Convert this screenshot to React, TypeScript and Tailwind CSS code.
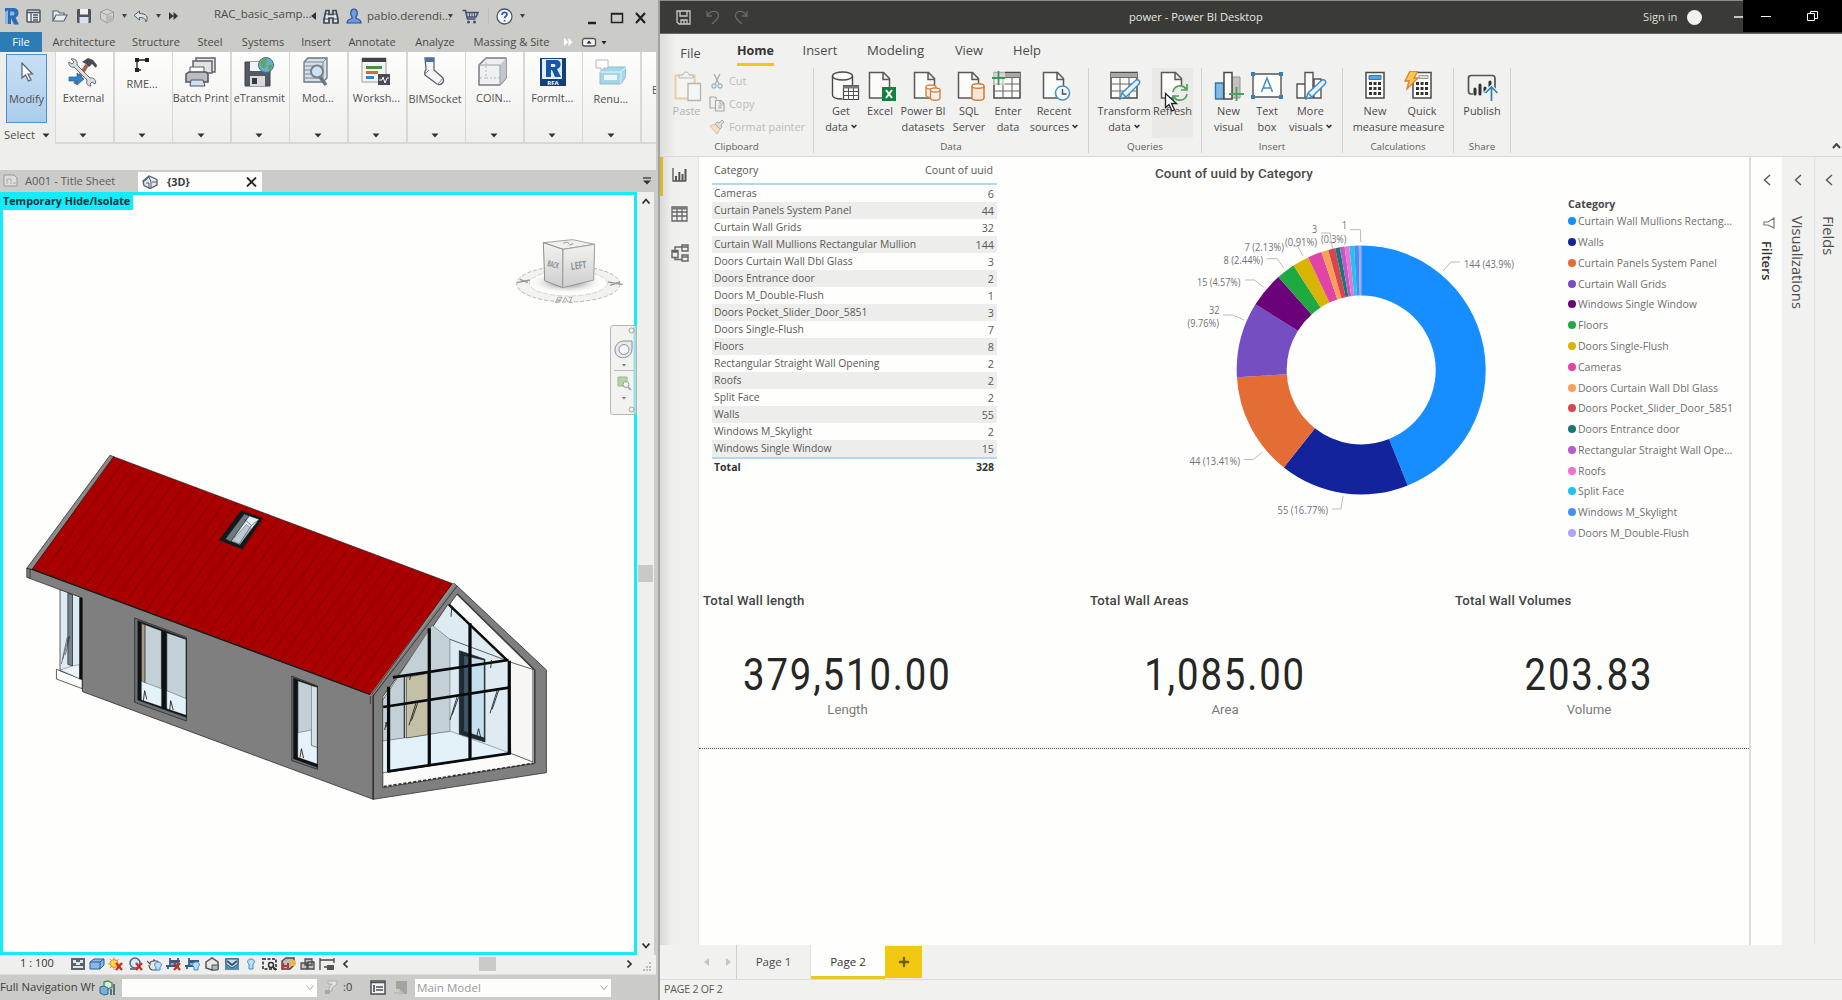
import React from "react";
import { Plus } from "lucide-react";

type Kids = { children?: React.ReactNode };

function Icon({ w, h, box, className = "", children }: Kids & { w: number; h: number; box?: string; className?: string }) {
  return (
    <svg width={w} height={h} viewBox={box ?? `0 0 ${w} ${h}`} fill="none" className={"block shrink-0 " + className}>
      {children}
    </svg>
  );
}

const Caret = ({ className = "" }: { className?: string }) => (
  <Icon w={8} h={5} className={className}>
    <path d="M0.5 0.5h7l-3.5 4z" fill="#333" />
  </Icon>
);

/* ---------------------------------------------------------------- Revit */

function RevitTitleBar() {
  return (
    <div className="flex h-8 items-center bg-[#cbcbc8] text-[12px] text-[#4c4c4c]">
      <Icon w={15} h={18} className="ml-1">
        <path d="M1 1h8c4 0 5.500 2 5.500 5 0 2-1 3.500-3 4.500l3.500 7h-5L7 11v6H1z" fill="#2a6db4" />
        <path d="M1 17V5l3-2v14zM6 4.500h3c2 0 2 4 0 4H6z" fill="#8ab8e4" />
      </Icon>
      <Icon w={15} h={14} className="ml-[7px]">
        <rect x="1" y="1" width="13" height="12" rx="1" fill="#f2f2f2" stroke="#4b5665" strokeWidth="1.5" />
        <path d="M1 3.500h13M5 4v9M7 6h5M7 8.500h5M7 11h5" stroke="#4b5665" strokeWidth="1.300" />
      </Icon>
      <Icon w={16} h={12} className="ml-[11px]">
        <path d="M1 11V1h5l1.500 2H12v2M1 11l3-6h11l-3 6z" fill="#e8edf3" stroke="#5a6470" strokeWidth="1.200" />
      </Icon>
      <Icon w={16} h={16} className="ml-2">
        <rect x="1" y="1" width="14" height="14" rx="1" fill="#4c5560" />
        <rect x="4" y="1" width="8" height="5.500" fill="#f1f1f1" />
        <rect x="3.500" y="9" width="9" height="6" fill="#d9e2ec" />
      </Icon>
      <Icon w={16} h={16} className="ml-[7px]">
        <path d="M8 1l6.500 3v7L8 15 1.500 11V4z" fill="#d2d2d0" stroke="#9b9b99" />
        <path d="M1.500 4L8 7l6.500-3M8 7v8" stroke="#a2a2a0" />
        <circle cx="11" cy="11" r="3.500" fill="#b9b9b7" />
      </Icon>
      <Icon w={5} h={4} className="ml-[7px]"><path d="M0 0h5L2.500 4z" fill="#444" /></Icon>
      <Icon w={16} h={13} className="ml-[6px]">
        <path d="M6.500 1L1 5.500l5.500 4.500V7.500c4 0 6 1 6.500 4.500 3-5 0-8.500-6.500-8.500z" fill="#dce1e6" stroke="#565f69" />
      </Icon>
      <Icon w={5} h={4} className="ml-[7px]"><path d="M0 0h5L2.500 4z" fill="#444" /></Icon>
      <Icon w={9} h={8} className="ml-[8px]"><path d="M0 0l4.500 4L0 8zM4.500 0L9 4 4.500 8z" fill="#333" /></Icon>
      <span className="-mt-1 ml-9 w-[92px] whitespace-nowrap text-[11.500px]">RAC_basic_samp...</span>
      <Icon w={5} h={8} className="ml-[5px]"><path d="M5 0v8L0 4z" fill="#333" /></Icon>
      <Icon w={16} h={15} className="ml-[7px]">
        <path d="M3 1.500h3v4h4v-4h3l2 8.500v4h-5V9H6v5H1v-4z" fill="#e3e6ea" stroke="#3d4651" strokeWidth="1.700" />
        <path d="M1 10h5M10 10h5M3 5h3M10 5h3" stroke="#3d4651" strokeWidth="1.200" />
      </Icon>
      <Icon w={16} h={16} className="ml-[7px]">
        <path d="M1 15c0-3 2-4 5-4.500V9C4 7 4 1 8 1s4 6 2 8v1.500c3 .5 5 1.500 5 4.500z" fill="#6f9ae0" stroke="#2e4c92" strokeWidth="1.200" />
      </Icon>
      <span className="ml-[5px] w-[80px] whitespace-nowrap text-[11.500px]">pablo.derendi...</span>
      <Icon w={5} h={4} className="ml-[1px]"><path d="M0 0h5L2.500 4z" fill="#444" /></Icon>
      <Icon w={17} h={15} className="ml-[9px]">
        <path d="M0.500 1.500h3l2 8.500h8M4 3.500h12L14 8H5.500" fill="#c3cbdc" stroke="#44506f" strokeWidth="1.600" />
        <path d="M7.500 4v4M10 4v4M12.500 4v4" stroke="#44506f" />
        <circle cx="6.500" cy="13" r="1.500" fill="#44506f" /><circle cx="12.500" cy="13" r="1.500" fill="#44506f" />
      </Icon>
      <span className="ml-[9px] h-4 w-px bg-[#bbbbb8]" />
      <Icon w={17} h={17} className="ml-[7px]">
        <circle cx="8.500" cy="8.500" r="7.500" fill="#fafafa" stroke="#4a5a72" strokeWidth="1.300" />
        <path d="M6 7c0-3.500 5-3.500 5-.5 0 1.800-2.400 1.800-2.400 3.700M8.600 12v1.400" stroke="#2860b8" strokeWidth="1.800" />
      </Icon>
      <Icon w={5} h={4} className="ml-[7px]"><path d="M0 0h5L2.500 4z" fill="#444" /></Icon>
      <Icon w={60} h={14} className="ml-[63px] mt-[3px]">
        <path d="M0 12h8" stroke="#222" strokeWidth="2.500" />
        <path d="M23.500 2.500h11v9h-11zM23 3h12" stroke="#222" strokeWidth="1.500" />
        <path d="M48 2l9 10M57 2l-9 10" stroke="#222" strokeWidth="2.200" />
      </Icon>
    </div>
  );
}

function RevitTabs() {
  const tab = "flex shrink-0 items-center justify-center whitespace-nowrap";
  return (
    <div className="flex h-5 bg-[#cbcbc8] text-[11px] text-[#4a4a4a]">
      <div className={tab + " w-[42px] bg-[#2c7cb6] text-white"}>File</div>
      <div className={tab + " w-[84px]"}>Architecture</div>
      <div className={tab + " w-[60px]"}>Structure</div>
      <div className={tab + " w-12"}>Steel</div>
      <div className={tab + " w-[58px]"}>Systems</div>
      <div className={tab + " w-12"}>Insert</div>
      <div className={tab + " w-16"}>Annotate</div>
      <div className={tab + " w-[62px]"}>Analyze</div>
      <div className={tab + " w-[91px] text-[11.200px]"}>Massing &amp; Site</div>
      <Icon w={50} h={10} className="ml-1.5 mt-[5px]">
        <path d="M1 1l4 4-4 4zM5.500 1l4 4-4 4z" fill="#fff" />
        <rect x="19.500" y="1.500" width="13" height="7.500" rx="2" fill="#f2f2f2" stroke="#4d535b" strokeWidth="1.300" />
        <path d="M23.500 6.500h5L26 3.500zM38.500 4h5L41 7.500z" fill="#222" />
      </Icon>
    </div>
  );
}

const ribbonIcons: Record<string, React.ReactNode> = {
  external: (
    <>
      <path d="M7 27L19 8" stroke="#a5654b" strokeWidth="4" />
      <path d="M14 5l6-4 5 2 4 5-1 3-4-4-3 3-3-3z" fill="#464c56" />
      <path d="M3 2c4-1 7 2 6 6l13 13c4-1 7 3 5 6l-3-2-2 2 1 2c-4 0-5-3-4-6L6 10C3 11 0 8 1 5l3 2 2-2z" fill="#d9dde0" stroke="#666d75" />
      <path d="M1 20h8v-4l7 6-7 6v-4H1z" fill="#2b86d1" stroke="#1a5d9d" strokeWidth=".7" />
    </>
  ),
  batch: (
    <>
      <path d="M11 1h19v14H11z" fill="#e8e8e8" stroke="#5d646e" strokeWidth="1.500" />
      <path d="M8 4h19v12H8z" fill="#e2e2e2" stroke="#5d646e" strokeWidth="1.500" />
      <path d="M5 10h14v7H5z" fill="#fff" stroke="#525a65" />
      <path d="M1 17l3-2h17l2 2v8H1z" fill="#b9bdc2" stroke="#4d5560" strokeWidth="1.500" />
      <path d="M6 23h12l2 6H5z" fill="#cfe0ee" stroke="#4d5560" />
    </>
  ),
  transmit: (
    <>
      <path d="M1 5h25v24H1z" fill="#535a64" stroke="#3c434d" />
      <path d="M6 5h14v9H6z" fill="#f4f4f4" />
      <path d="M6 19h15v10H6z" fill="#d9d9d9" /><path d="M8 21h5v6H8z" fill="#343b44" />
      <circle cx="22" cy="8" r="7.500" fill="#5fb2c8" stroke="#356f8d" />
      <path d="M16 6c3-5 6-5 7-3s-2 3-1 5-2 4-4 2zM24 8c3-1 5 0 4 3l-3 3z" fill="#69a25e" />
    </>
  ),
  mod: (
    <>
      <path d="M2 5l4-4h19v20l-4 4H2z" fill="#d6dee8" stroke="#6b7683" strokeWidth="1.300" />
      <path d="M2 5h19v20M21 5l4-4M2 9h19M2 13h19M2 17h19M2 21h19" stroke="#7e8a99" />
      <path d="M18 20l6 8" stroke="#6e747b" strokeWidth="3.500" />
      <circle cx="15" cy="14.500" r="6" fill="#cfe0f0" stroke="#777f88" strokeWidth="2" />
    </>
  ),
  worksh: (
    <>
      <path d="M1 1h24v24H1z" fill="#f5f5f3" stroke="#9d9d9b" /><path d="M1 1h24v4H1z" fill="#3f444e" />
      <path d="M5 10.500h16" stroke="#4d8e3d" strokeWidth="3" /><path d="M5 15.500h12" stroke="#d06f35" strokeWidth="3" /><path d="M5 20.500h8" stroke="#3b82c4" strokeWidth="3" />
      <path d="M17 17h12v11H17z" fill="#474c55" /><path d="M18 23h3l1-3 2 6 2-5h2" stroke="#fff" />
    </>
  ),
  sock: (
    <>
      <path d="M5 1h9v12l9 8c2 4-2 8-6 6L5 18c-1-2 0-4 1-6z" fill="#f5f5f5" stroke="#5f6369" strokeWidth="1.300" />
      <path d="M5 1h9v4H5z" fill="#4b71b2" /><path d="M5 17l4-4M18 27l5-6" stroke="#888" />
    </>
  ),
  coin: (
    <>
      <path d="M1 8l7-7h20v20l-6 7H1z" fill="#eef0f1" stroke="#777b81" strokeWidth="1.500" strokeLinejoin="round" />
      <path d="M22 8l6-7v20l-6 7z" fill="#c3c7cb" /><path d="M1 8h21v20" stroke="#9a9fa5" /><path d="M8 1v20H1M8 21h14" stroke="#b3b7bb" strokeDasharray="2 2" />
    </>
  ),
  renu: (
    <>
      <path d="M5 15l5-5h21v9l-5 8H5z" fill="#a6d6e5" stroke="#87bfd1" /><path d="M5 15h21l5-5M26 15v12" stroke="#e1f5fa" />
      <path d="M9 18h13v5H9z" fill="#e9f7fa" /><path d="M1 3h12v8H9l-3 3v-3H1z" fill="#fff" stroke="#b9b9b9" />
    </>
  ),
};

function RibbonPanel({ label, icon, top = "mt-1" }: { label: string; icon: React.ReactNode; top?: string }) {
  return (
    <div className="flex h-[90px] w-[57px] shrink-0 flex-col items-center overflow-hidden bg-gradient-to-b from-[#fdfdfc] to-[#efefee] pr-[2px] pt-[5px]">
      {icon}
      <span className={top + " whitespace-nowrap text-[10.900px] leading-[16px] text-[#505050]"}>{label}</span>
      <Caret className="mb-1 mt-auto" />
    </div>
  );
}

function RevitRibbon() {
  const big = (k: string) => <Icon w={31} h={30}>{ribbonIcons[k]}</Icon>;
  return (
    <div className="flex h-[118px] gap-[1.6px] bg-[#eeeeea]">
      <div className="flex h-[91px] w-[53.400px] shrink-0 flex-col">
        <div className="ml-1.5 mt-0.5 flex h-[69px] w-[41px] flex-col items-center border-[1.5px] border-[#4a90d3] bg-gradient-to-b from-[#c9dff5] to-[#abcdea]">
          <Icon w={14} h={20} className="mt-[7px]">
            <path d="M2 1v15l3.500-3 3 6 2.500-1-3-6h4.500z" fill="#fff" stroke="#57606b" strokeWidth="1.200" />
          </Icon>
          <span className="mt-[8px] text-[11px] leading-[17px] text-[#505050]">Modify</span>
        </div>
        <div className="mt-1 flex items-center gap-[7px] pl-1 text-[11.200px] leading-4 text-[#505050]">Select <Caret /></div>
      </div>
      <div className="flex h-[92px] w-[601px] gap-[1.6px] overflow-hidden bg-[#d8d8d6] pl-px">
        <RibbonPanel label="External" icon={big("external")} top="mt-[3px]" />
        <RibbonPanel label="RME..." top="mt-[3px]" icon={
          <Icon w={16} h={15} className="mt-px">
            <path d="M3 12V2h11M3 12h4" stroke="#222" strokeWidth="1.300" />
            <path d="M1 0h4v4H1zM11 0h4v4h-4zM1 10h4v4H1z" fill="#222" />
          </Icon>} />
        <RibbonPanel label="Batch Print" icon={big("batch")} top="mt-[3px]" />
        <RibbonPanel label="eTransmit" icon={big("transmit")} top="mt-[3px]" />
        <RibbonPanel label="Mod..." icon={big("mod")} top="mt-[3px]" />
        <RibbonPanel label="Worksh..." icon={big("worksh")} top="mt-[3px]" />
        <RibbonPanel label="BIMSocket" icon={big("sock")} />
        <RibbonPanel label="COIN..." icon={big("coin")} top="mt-[3px]" />
        <RibbonPanel label="FormIt..." top="mt-[3px]" icon={
          <Icon w={31} h={30}>
            <rect x="3" y="1" width="26" height="28" fill="#163f7a" /><rect x="5" y="2" width="20" height="20" fill="#e1edf9" />
            <path d="M9 3h10c6 0 6 8 1 9l4 8h-6l-3-7h-1v7H9zM14 7v3h3c2 0 2-3 0-3z" fill="#18569f" fillRule="evenodd" />
            <text x="16" y="28" textAnchor="middle" fill="#fff" fontSize="6" fontWeight="700">RFA</text>
          </Icon>} />
        <RibbonPanel label="Renu..." icon={big("renu")} />
        <div className="h-[90px] w-4 shrink-0 overflow-hidden bg-gradient-to-b from-[#fdfdfc] to-[#efefee] pl-[10px] pt-[31px] text-[10px] text-[#505050]">E</div>
      </div>
    </div>
  );
}

function DocumentTabs() {
  return (
    <div className="flex h-[22px] items-center bg-[#cbcbc8] text-[11.500px]">
      <div className="flex w-[138px] items-center gap-[7px] pl-[3px] text-[#5c5c5c]">
        <Icon w={15} h={13}>
          <path d="M1 1h10l3 3v8H1z" fill="#dededc" stroke="#969694" /><path d="M4 10V5h4v5M10 9h3" stroke="#aaa" />
        </Icon>
        <span className="whitespace-nowrap text-[11.200px]">A001 - Title Sheet</span>
      </div>
      <div className="mt-0.5 flex h-5 w-[124px] items-center bg-[#fdfdfc] pl-1">
        <Icon w={16} h={14}>
          <path d="M1 6l6-5 7 3 1 1v5l-7 3.500-6-3z" fill="#e7eaed" stroke="#545f6d" strokeWidth="1.300" />
          <path d="M1 6h2l4-4 2 5v6M4 8h3v5M10 7h5" stroke="#545f6d" />
        </Icon>
        <span className="ml-[9px] text-[10.800px] font-bold text-[#3c3c3c]">{"{3D}"}</span>
        <Icon w={11} h={10} className="ml-auto mr-[5px]"><path d="M1 .5l9 9M10 .5l-9 9" stroke="#222" strokeWidth="1.800" /></Icon>
      </div>
      <Icon w={8} h={8} className="ml-auto mr-[5px]"><path d="M0 1h8" stroke="#333" strokeWidth="1.300" /><path d="M0 3.500h8L4 7.500z" fill="#333" /></Icon>
    </div>
  );
}

const seams = Array.from({ length: 32 }, (_, i) => (i + 1) / 33);

function House() {
  return (
    <svg x="0" y="440" width="560" height="370" viewBox="0 0 1568 1110" preserveAspectRatio="none" stroke="#1c1c1c" strokeWidth="2" strokeLinejoin="round">
      {/* porch window and plinth */}
      <path d="M158 688l72 30v28l-72-29z" fill="#fcfcfa" />
      <path d="M168 448l62 24v246l-62-26z" fill="#deeaf2" />
      <path d="M190 460l13 5v213l-13-5z" fill="#75848c" />
      <path d="M168 690l35-12 20-4v42z" fill="#ebf5f9" strokeWidth="1" />
      <path d="M193 588l-17 70M195 590l-12 55M188 592l-16 80" strokeWidth="1.500" />
      <path d="M226 472v246" strokeWidth="8" stroke="#0a0d10" />
      {/* long wall */}
      <path d="M75 385l15 3 955 377v313L231 755V474L75 412z" fill="#7f7f7f" />
      <path d="M84 388v28" />
      {/* roof */}
      <path d="M308 46l12 5L90 388l-15-3z" fill="#8b8b8b" />
      <path d="M318 50l952 382-230 333L90 388z" fill="#ab0000" />
      {seams.map((t) => (
        <path key={t} d={`M${318 + t * 952} ${50 + t * 382}L${90 + t * 950} ${388 + t * 377}`} stroke="#620000" strokeWidth="1.700" />
      ))}
      <path d="M90 388l950 377" strokeWidth="4" />
      {/* skylight */}
      <path d="M675 212l60 23-57 92-64-27z" fill="#12181c" />
      <path d="M684 222l42 16-55 76-40-17z" fill="#e2edf4" />
      <path d="M684 222l14 5-52 78-15-8z" fill="#6d7a82" />
      <path d="M690 254l-40 46 22 14 32-48z" fill="#bccbd2" strokeWidth="1" />
      <path d="M684 238l20 18 22-18M704 256l-34 56" strokeWidth="1.500" fill="none" />
      {/* double window */}
      <path d="M377 534l145 58v251l-145-56z" fill="#6a7073" />
      <path d="M386 542l136 54v236l-136-52z" fill="#0d1216" />
      <path d="M396 550l56 22v222l-56-20zM467 578l54 20v222l-54-20z" fill="#c3d0d6" />
      <path d="M396 550l10 4v178l-10-4z" fill="#a49c84" />
      <path d="M396 724l56 22v54l-56-20zM467 752l54 24v50l-54-20z" fill="#e5f2f9" strokeWidth="1" />
      <path d="M405 752l-4 34M405 752l6 26M478 782l-3 30M478 782l7 28" strokeWidth="2.500" />
      {/* single window */}
      <path d="M817 708l72 30v250l-72-26z" fill="#6a7073" />
      <path d="M822 714l67 26v242l-67-26z" fill="#0d1216" />
      <path d="M834 722l54 20v229l-54-20z" fill="#c3d0d6" />
      <path d="M834 878l38-8v46l16 6v50l-54-20z" fill="#e5f2f9" strokeWidth="1" />
      <path d="M872 738v178l16 6V742z" fill="#d5e1e7" strokeWidth="1" />
      <path d="M844 926l-4 26M844 926l6 28" strokeWidth="2.500" />
      {/* gable frame */}
      <path d="M1045 765l227-335 258 260v308l-485 80z" fill="#7f7f7f" />
      <path d="M1272 430l-234 338" strokeWidth="7" stroke="#8f8f8f" />
      <path d="M1280 438l-235 330M1265 432l-225 333M1037 768v24" />
      <path d="M1072 770l208-308 217 228v280l-425 73z" fill="#fbfbf9" />
      <path d="M1280 462l217 228v280" strokeWidth="5" stroke="#3f3f3f" fill="none" />
      <path d="M1255 492l170 173 5 275-342 56-16 2V780z" fill="#deebf3" />
      <path d="M1425 665l67 23v278l-62-26z" fill="#f7f6f5" />
      <path d="M1210 556l50 42v276l-188 30V780z" fill="#c3d0d6" strokeWidth="1" />
      <path d="M1072 903l190-29 168 66-342 56-16 2z" fill="#e3f1f8" strokeWidth="1" />
      <path d="M1138 712l60-12v184l-60 10z" fill="#c4c0a5" strokeWidth="1.500" />
      <path d="M1132 708v185" strokeWidth="3" />
      <path d="M1260 598l160 64" />
      <path d="M1286 632l72 26v248l-72-24z" fill="#1b2c38" />
      <path d="M1298 646l58 14v234l-58-20z" fill="#c5dfee" />
      <path d="M1298 646l14 4v228l-14-4z" fill="#3d5564" />
      <path d="M1202 565v410M1316 550v406M1426 662v280M1088 740v256" stroke="#080b0d" strokeWidth="9" />
      <path d="M1100 712l324-52M1073 801l352-58" stroke="#080b0d" strokeWidth="8" />
      <path d="M1086 994l344-54" stroke="#080b0d" strokeWidth="8" />
      <path d="M1257 494l164 168" stroke="#080b0d" strokeWidth="7" />
      <path d="M1165 788l-20 68M1170 788l-18 54M1280 770l-20 70M1284 772l-18 52M1392 752l-20 68M1396 752l-18 56M1265 500l-2 30M1340 866l-5 22M1340 866l6 26M1082 846l-5 24M1080 846l6 22M1376 660l-2 24M1150 706l-3 14" strokeWidth="2.500" />
      <path d="M1074 1040l420-70" strokeWidth="5" strokeDasharray="9 5" stroke="#333" />
      <path d="M1045 765v313" />
    </svg>
  );
}

function ViewCube() {
  return (
    <svg x="500" y="190" width="140" height="160" viewBox="0 0 420 480">
      <defs>
        <radialGradient id="cubeShade"><stop offset="0.3" stopColor="#888" stopOpacity="0.75" /><stop offset="1" stopColor="#fff" stopOpacity="0" /></radialGradient>
        <linearGradient id="cubeFace" x2="0" y2="1"><stop stopColor="#f2f2f1" /><stop offset="1" stopColor="#cfcfcf" /></linearGradient>
      </defs>
      <ellipse cx="205" cy="282" rx="155" ry="54" fill="#f2f2f1" stroke="#b8b8b8" strokeWidth="3" strokeDasharray="12 6" />
      <ellipse cx="205" cy="280" rx="117" ry="38" fill="#fdfdfc" stroke="#c4c4c4" strokeWidth="2" strokeDasharray="16 5" />
      <ellipse cx="200" cy="277" rx="112" ry="34" fill="url(#cubeShade)" />
      <path d="M130 158l88-9 66 14-95 15z" fill="#efefee" stroke="#a3a3a3" strokeWidth="3" />
      <path d="M130 158l59 20-1 115-54-21z" fill="url(#cubeFace)" stroke="#8e8e8e" strokeWidth="3" />
      <path d="M189 178l95-15-3 107-93 23z" fill="url(#cubeFace)" stroke="#9b9b9b" strokeWidth="3" />
      <path d="M190 160l10-4 8 5M208 165l12-4" stroke="#999" strokeWidth="3" fill="none" />
      <text x="214" y="240" fontSize="31" fontWeight="700" fill="#8a8d92" textLength="46" lengthAdjust="spacingAndGlyphs" transform="rotate(-7 214 240)">LEFT</text>
      <text x="141" y="228" fontSize="25" fontWeight="700" fill="#8d8d8d" textLength="34" lengthAdjust="spacingAndGlyphs" transform="rotate(14 141 228)">BACK</text>
      <path d="M50 278l40-8M60 268l24 10M324 276l44 8M330 286l30-10" stroke="#999" strokeWidth="4" />
      <path d="M166 338l8-16h12l-6 8h-8l10 2-6 6zM188 338l8-16 8 14M206 322h10l-8 16h10" stroke="#aaa" strokeWidth="3" />
    </svg>
  );
}

function NavigationBar() {
  return (
    <div className="absolute left-[607px] top-[130px] flex h-[90px] w-[27px] flex-col rounded-[3px] border border-[#b5b7b6] bg-[#f1f2f0]/90">
      <Icon w={26} h={88}>
        <path d="M22.500 0.500h2.500v88h-2.500z" fill="#62d8df" fillOpacity=".6" />
        <circle cx="20.500" cy="4.500" r="2.500" stroke="#a4a4a4" /><circle cx="20.500" cy="83.500" r="2.500" stroke="#a4a4a4" />
        <path d="M13 15h8v8c0 11-17 12-17 1 0-5 4-9 9-9z" fill="#e6eaee" stroke="#8a9097" />
        <circle cx="13" cy="23.500" r="5" fill="#f5f6f7" stroke="#8a9097" />
        <path d="M11 38h4l-2 2.500zM11 71h4l-2 2.500z" fill="#777" />
        <path d="M3 44.500h20" stroke="#bdbdbd" />
        <path d="M7 51h9v9H7z" fill="#b5d3a5" stroke="#96b986" />
        <circle cx="15" cy="58.500" r="3" fill="#f5f5f5" stroke="#999" /><path d="M17 61l3 3" stroke="#999" strokeWidth="1.500" />
      </Icon>
    </div>
  );
}

function Viewport() {
  return (
    <div className="flex h-[763px]">
      <div className="relative h-[763px] w-[637px] shrink-0 border-[3px] border-[#12ecfc] bg-[#fefefc]">
        <Icon w={631} h={757} box="3 195 631 757">
          <ViewCube />
          <House />
        </Icon>
        <div className="absolute left-0 top-0 h-[15px] w-[130px] whitespace-nowrap bg-[#12ecfc] text-[10.750px] font-bold leading-[13px] text-[#12343a]">Temporary Hide/Isolate</div>
        <NavigationBar />
      </div>
      <div className="flex w-[17px] flex-col items-center justify-between bg-[#efefed] py-1.5">
        <Icon w={8} h={6}><path d="M0.500 5.500l3.500-4 3.500 4" stroke="#333" strokeWidth="1.800" /></Icon>
        <div className="h-[17px] w-[15px] bg-[#c9c9c8]" />
        <Icon w={8} h={6}><path d="M0.500 .5l3.500 4 3.500-4" stroke="#333" strokeWidth="1.800" /></Icon>
      </div>
    </div>
  );
}

const cross = <path d="M8 6l6 7M14 6l-6 7" stroke="#c03127" strokeWidth="2.200" />;
const bulb = <path d="M11 5c-4 0-4 4-2 5v3h4v-3c2-1 2-5-2-5z" fill="#b9defa" stroke="#4288c7" />;
const viewIcons: React.ReactNode[] = [
  <><path d="M1 1h14v12H1z" fill="#5c626b" /><path d="M3 3h3v3H3zM10 3h3v3h-3zM3 9h10v2H3zM6 5h4v3H6z" fill="#dce4ec" /></>,
  <><path d="M1 5l4-3h10v6l-4 4H1z" fill="#86b9e4" stroke="#2c5d91" /><path d="M1 5h10l4-3M11 5v7" stroke="#2c5d91" /></>,
  <><path d="M6 0v13M0 7h12M2 2l9 9M11 2l-9 9" stroke="#e1a225" /><circle cx="6" cy="6.500" r="4" fill="#fbd255" stroke="#d69825" />{cross}</>,
  <><circle cx="7" cy="6" r="5" fill="#d5e9fa" stroke="#45678d" strokeWidth="1.500" /><path d="M2 12h8" stroke="#777" strokeWidth="2" />{cross}</>,
  <><path d="M0 4l3 3c0-2 1-3 4-3h3l2 2v4l-3 3H5c-2-1-3-3-3-5M6 3h2" fill="#e6e6e6" stroke="#555" strokeWidth="1.200" />{bulb}</>,
  <><path d="M0 9h4V4h10M2 12V8M4 4V1M12 1v4M4 5h8v4H4z" fill="#8fb0cf" stroke="#365c85" strokeWidth="1.800" />{cross}</>,
  <><path d="M0 9h4V4h10M2 12V8M4 4V1M4 5h6v4H4z" fill="#8fb0cf" stroke="#365c85" strokeWidth="1.800" />{bulb}</>,
  <><path d="M2 5l6-4 6 4v7l-6 1-6-2z" fill="#e7e7e7" stroke="#555" strokeWidth="1.500" /><path d="M8 8h6v5H8z" fill="#a5beb0" stroke="#456" /></>,
  <><path d="M1 1h14v12H1z" fill="#548cb8" /><path d="M2 2h12v5l-6 4-6-4z" fill="#c8ddea" stroke="#38566f" /><path d="M3 4l5 4 5-4" stroke="#38566f" strokeWidth="2" /></>,
  <path d="M8 2c-4 0-4 4-2 5v5h4V7c2-1 2-5-2-5z" fill="#b9defa" stroke="#4288c7" />,
  <><path d="M1 2h13v10H1z" stroke="#555" strokeWidth="2" strokeDasharray="3 1.500" /><circle cx="9" cy="8" r="2.500" stroke="#333" strokeWidth="1.500" /><path d="M11 10l3 3" stroke="#333" strokeWidth="2" /></>,
  <><path d="M1 4l4-3h8v7l-4 4H1z" fill="#bbb" stroke="#544" strokeWidth="1.500" /><path d="M2 6v7M7 6v7M2 9h6" stroke="#b23a30" strokeWidth="2" /><circle cx="12" cy="6" r="3" fill="#f5b540" /></>,
  <><path d="M1 6h6v6H1zM5 2h7v6H5zM8 5h6v7H8z" fill="#c2c2c2" stroke="#4d4d4d" strokeWidth="1.300" /></>,
  <><path d="M1 1v12M15 1v5M1 3h14M5 10h4" stroke="#444" strokeWidth="1.300" /><path d="M8 8h7v5H8z" fill="#555" /></>,
];

function RevitStatus() {
  return (
    <>
      <div className="flex h-[19px] items-center bg-[#efefed] pb-[2px] pl-5 text-[11px] text-[#333]">
        <span className="w-[50px] whitespace-pre text-[11px]">1 : 100</span>
        {viewIcons.map((node, i) => (
          <Icon key={i} w={16} h={14} className="mr-[3.200px]">{node}</Icon>
        ))}
        <Icon w={5} h={8} className="ml-[4px]"><path d="M4.500 .5L1 4l3.500 3.500" stroke="#333" strokeWidth="1.600" /></Icon>
        <div className="ml-[131px] h-[14px] w-[17px] bg-[#cacac9]" />
        <Icon w={5} h={8} className="ml-[131px]"><path d="M.5 .5L4 4 .5 7.500" stroke="#333" strokeWidth="1.600" /></Icon>
        <Icon w={10} h={10} className="ml-[10px] mt-1.5"><path d="M7 0h2v2H7zM4 4h2v2H4zM7 4h2v2H7zM1 7h2v2H1zM4 7h2v2H4zM7 7h2v2H7z" fill="#bbb" /></Icon>
      </div>
      <div className="flex h-[26px] items-center border-t border-[#dededc] bg-[#cbcbc8] text-[11.500px] text-[#3e3e3e]">
        <span className="w-[95px] overflow-hidden whitespace-nowrap text-[11.300px]">Full Navigation Wh</span>
        <Icon w={17} h={16} className="ml-[4px]">
          <path d="M5 2l4-1 4 2v4l-4 2-4-2z" fill="#dceedd" stroke="#46934a" strokeWidth="1.300" />
          <path d="M1 7l4-1 4 2v6l-4 1-4-2z" fill="#71b1da" stroke="#2d648d" /><path d="M12 9v6M15 4v11" stroke="#5b7180" strokeWidth="2" />
        </Icon>
        <div className="ml-[6px] flex h-[18px] w-[195px] items-center justify-end bg-[#fdfdfc] pr-[3px]">
          <Icon w={8} h={6}><path d="M.5 .5l3.500 4 3.500-4" stroke="#a6a6a6" /></Icon>
        </div>
        <Icon w={14} h={15} className="ml-[7px]"><path d="M4 1h9v3L8 8v3H5V8l3-4H4z" fill="#e2e2e0" stroke="#acacaa" /><path d="M1 10h5v4H1z" fill="#a6a6a4" /></Icon>
        <span className="ml-[5px] w-[17px] text-[11px]">:0</span>
        <Icon w={16} h={15} className="ml-[10px]"><path d="M1 1h14v13H1z" fill="#f4f4f4" stroke="#4b4f57" strokeWidth="1.500" /><path d="M1 2.500h14M4 5v7M6 7h7M6 10h7" stroke="#4b4f57" strokeWidth="1.700" /></Icon>
        <Icon w={15} h={15} className="ml-[7px]"><path d="M3 1h11v13H7V9H3z" fill="#a3a3a1" /><path d="M1 13h8M6 10l4 3-4 2" stroke="#bcbcba" strokeWidth="1.500" /></Icon>
        <div className="ml-[7px] flex h-[18px] w-[196px] items-center justify-between bg-[#fdfdfc] pl-0.5 pr-[3px] text-[11.600px] text-[#9a9a9a]">
          Main Model
          <Icon w={8} h={6}><path d="M.5 .5l3.500 4 3.500-4" stroke="#a6a6a6" /></Icon>
        </div>
      </div>
    </>
  );
}

function RevitWindow() {
  return (
    <section className="flex w-[660px] shrink-0 flex-col border-r-2 border-[#a2a29f] bg-[#cbcbc8]">
      <div className="w-[656px]">
        <RevitTitleBar />
        <RevitTabs />
        <RevitRibbon />
        <DocumentTabs />
        <Viewport />
        <RevitStatus />
      </div>
    </section>
  );
}

/* ------------------------------------------------------------- Power BI */

const page = <path d="M1.500 1.500h14l6 6V27h-20zM15 1.500v7h6.500" fill="#fbfbfa" stroke="#5b5957" strokeWidth="1.500" />;
const tableGlyph = (
  <>
    <path d="M1 1.500h26V27H1z" fill="#fbfbfa" stroke="#4b4a48" strokeWidth="1.500" />
    <path d="M1 2h26v4H1z" fill="#aaa8a5" /><path d="M1 6.500h26M1 13h26M1 20h26M10 7v20M19 7v20" stroke="#6b6967" strokeWidth="1.100" />
  </>
);
const pencil = <path d="M10 28l2-6L26 9c2-1 5 1 3 4L16 26zM12 22l4 4" fill="#e6f2fa" stroke="#3c8cc4" strokeWidth="1.400" />;

const biIcons: Record<string, React.ReactNode> = {
  get: (
    <>
      <path d="M1.500 5v19c0 3 5 4 10 4h1V14h9V5" fill="#fbfbfa" /><ellipse cx="11.500" cy="5" rx="10" ry="4" fill="#fbfbfa" stroke="#4b4a48" strokeWidth="1.400" /><path d="M1.500 5v19c0 3 5 4 10 4M21.500 5v9" stroke="#4b4a48" strokeWidth="1.400" />
      <path d="M12.500 14.500h15v14h-15z" fill="#fff" stroke="#444" strokeWidth="1.200" /><path d="M12 16h16" stroke="#777" strokeWidth="3" /><path d="M12 20.500h16M12 24.500h16M17.500 17v12M22.500 17v12" stroke="#555" />
    </>
  ),
  excel: (<>{page}<rect x="14" y="16" width="14" height="14" fill="#16803f" /><path d="M18 19l6 8M24 19l-6 8" stroke="#fff" strokeWidth="2" /></>),
  pbi: (
    <>{page}
      <path d="M13 16v8c0 3 7 3 9 2V16" fill="#fbeee2" stroke="#d98340" strokeWidth="1.400" /><ellipse cx="18" cy="16" rx="5" ry="2" fill="#fff" stroke="#d98340" strokeWidth="1.300" />
      <path d="M17.500 19v8c0 3 9.500 3 9.500 0v-8" fill="#fbf0e7" stroke="#d98340" strokeWidth="1.400" /><ellipse cx="22.200" cy="19" rx="4.800" ry="2" fill="#fff" stroke="#d98340" strokeWidth="1.300" />
    </>
  ),
  sql: (<>{page}<path d="M15 15v12c0 3 12 3 12 0V15" fill="#f7e7d9" stroke="#d07a38" strokeWidth="1.500" /><ellipse cx="21" cy="15" rx="6" ry="2.300" fill="#fff" stroke="#d07a38" strokeWidth="1.500" /></>),
  enter: (<><g transform="translate(1 0)">{tableGlyph}</g><path d="M0 0h13v14H0z" fill="#f1f1ef" fillOpacity=".6" /><path d="M6.500 0v14M0 7h13" stroke="#3f9354" strokeWidth="1.800" /></>),
  recent: (<>{page}<circle cx="20.500" cy="22" r="7" fill="#f5fafc" stroke="#4996c6" strokeWidth="1.600" /><path d="M20.500 18v5h4" stroke="#444" strokeWidth="1.300" /></>),
  transform: (<>{tableGlyph}{pencil}</>),
  refresh: (<>{page}<circle cx="20" cy="22" r="8" fill="#edece8" /><path d="M13 21c1-7 10-8 13-3M27 13v6h-6M27 23c-1 7-10 8-13 3M13 30v-5h6" stroke="#4e9f5c" strokeWidth="1.700" /></>),
  newVisual: (
    <>
      <path d="M1.500 12h8v16h-8z" fill="#84bbe5" stroke="#2f75ad" strokeWidth="1.400" /><path d="M18 6h8v21h-8z" fill="#c4c2bf" stroke="#96948f" /><path d="M10 1.500h8V28h-8z" fill="#fdfdfc" stroke="#4b4a48" strokeWidth="1.500" />
      <path d="M15 23h15M22.500 16v14" stroke="#4e9f5c" strokeWidth="1.800" />
    </>
  ),
  textBox: (
    <>
      <path d="M2 3h28v23H2z" fill="#fdfdfc" stroke="#565452" strokeWidth="1.400" /><path d="M10.500 21L16 7l5.500 14M12 17h8" stroke="#3c8dce" strokeWidth="1.500" />
      <path d="M0 1h4v4H0zM28 1h4v4h-4zM0 24h4v4H0zM28 24h4v4h-4z" fill="#2f82bf" />
    </>
  ),
  more: (<><path d="M1 13h8v14H1zM18 8h7v19h-7zM9 1.500h8V27H9z" fill="#fbfbfa" stroke="#565452" strokeWidth="1.400" />{pencil}</>),
  calc: (
    <>
      <path d="M6 1.500h18V27H6z" fill="#fdfdfc" stroke="#4b4a48" strokeWidth="1.500" /><path d="M9 4.500h12v4H9z" fill="#5ca4e0" stroke="#2c78b8" />
      <path d="M9 12.500h3M13.500 12.500h3M18 12.500h3M9 17.500h3M13.500 17.500h3M18 17.500h3M9 22.500h3M13.500 22.500h3M18 22.500h3" stroke="#333" strokeWidth="3" />
    </>
  ),
  quick: (
    <>
      <path d="M10 1.500h18V27H10z" fill="#fdfdfc" stroke="#4b4a48" strokeWidth="1.500" /><path d="M16 4.500h9v3h-9z" fill="#ddd" stroke="#999" />
      <path d="M13 12.500h3M17.500 12.500h3M22 12.500h3M13 17.500h3M17.500 17.500h3M22 17.500h3M13 22.500h3M17.500 22.500h3M22 22.500h3" stroke="#333" strokeWidth="3" />
      <path d="M7 0h8l-4 7h4L4 18l2-8H2z" fill="#fbc556" stroke="#dd812f" strokeWidth="1.300" />
    </>
  ),
  publish: (
    <>
      <path d="M6 23H4c-2 0-2.500-1-2.500-3V7c0-2 1-2.500 3-2.500h21c2 0 2.500 1 2.500 3V20" stroke="#555" strokeWidth="1.700" />
      <path d="M8 18v5M13 14v9M18 17v3M23 11v5" stroke="#333" strokeWidth="3" strokeLinecap="round" />
      <path d="M24.500 30V16M18.500 22l6-6 6 6" stroke="#f1f1ef" strokeWidth="4" /><path d="M24.500 30V16M18.500 22l6-6 6 6" stroke="#2f80b5" strokeWidth="1.700" />
    </>
  ),
};

const Chevron = () => (
  <Icon w={6} h={5} className="ml-[3px] mt-px"><path d="M.6 1l2.400 2.400L5.400 1" stroke="#333" strokeWidth="1.600" /></Icon>
);

function Tool({ icon, lines, width, shift = "", arrow, highlight }: { icon: string; lines: string[]; width: string; shift?: string; arrow?: boolean; highlight?: boolean }) {
  return (
    <div className={"relative flex h-[70px] shrink-0 flex-col items-center pt-[3px] " + width + (highlight ? " bg-[#eae9e5]" : "")}>
      <Icon w={32} h={31} className={shift}>{biIcons[icon]}</Icon>
      {lines.map((l, i) => (
        <span key={l} className={"flex items-center whitespace-nowrap text-[10.900px] leading-[15.500px] text-[#4d4b49]" + (i === 0 ? " mt-px" : "")}>
          {l}{arrow && i === lines.length - 1 && <Chevron />}
        </span>
      ))}
      {highlight && (
        <Icon w={15} h={21} className="absolute left-[12px] top-6">
          <path d="M1.500 1.500v14l3.500-3 3 6.500 2.500-1-3-6.500h5z" fill="#fff" stroke="#222" strokeWidth="1.300" />
        </Icon>
      )}
    </div>
  );
}

function Group({ label, width, pad = "", children }: Kids & { label: string; width: string; pad?: string }) {
  return (
    <div className={"flex h-[85px] shrink-0 flex-col border-r border-[#d3d2cf] " + width}>
      <div className={"flex h-[73px] " + pad}>{children}</div>
      <span className="mt-[3px] text-center text-[9.800px] leading-[12px] text-[#5f5d5b]">{label}</span>
    </div>
  );
}

function BiHeader() {
  const tab = "flex items-center justify-center shrink-0";
  return (
    <header className="h-[157px] border-b border-[#dad9d7] bg-[#f1f1ef] bg-gradient-to-r from-[#dededc] to-[#f1f1ef] to-[16px]">
      <div className="flex h-[34px] border-b border-t border-b-[#6b6a68] border-t-[#8b8b88] bg-[#3a3a37]">
        <div className="flex flex-1 items-center">
          <Icon w={15} h={15} className="ml-4"><path d="M1 1h13v13H3L1 12zM4 1v5h7V1M5 14v-4h6v4M8 10v4" stroke="#c9c9c7" strokeWidth="1.300" /></Icon>
          <Icon w={14} h={15} className="ml-[15px]"><path d="M1 1v5h5M1.500 5.500C5-1 12 1 12.500 5S9 11 6 14" stroke="#6a6a67" strokeWidth="1.300" /></Icon>
          <Icon w={14} h={15} className="ml-[14px]"><path d="M13 1v5H8M12.500 5.500C9-1 2 1 1.500 5S5 11 8 14" stroke="#6a6a67" strokeWidth="1.300" /></Icon>
          <span className="ml-[381px] w-[133px] whitespace-nowrap text-[11.100px] text-[#e8e8e6]">power - Power BI Desktop</span>
          <span className="ml-[381px] w-9 whitespace-nowrap text-[11.200px] text-[#dededc]">Sign in</span>
          <span className="ml-[8px] size-[15px] rounded-full bg-[#f2f2f0]" />
          <span className="ml-auto h-[1.500px] w-[9px] bg-[#c4c4c2]" />
        </div>
        <div className="-mt-px flex h-8 w-[99px] items-center bg-black">
          <Icon w={99} h={32}>
            <path d="M18 16.500h10M67.500 13.500v-2h7v7h-3M64.500 13.500h7v7h-7z" stroke="#fff" />
          </Icon>
        </div>
      </div>
      <nav className="flex h-[34px] text-[12.900px] text-[#4c4a48]">
        <div className={tab + " w-[61px] pt-[5px] text-[12.800px]"}>File</div>
        <div className={tab + " w-[69px]"}>
          <span className="mt-[3px] flex h-[26px] items-start border-b-[3px] border-[#f2c811] text-[12.500px] font-bold leading-[21px] text-[#333]">Home</span>
        </div>
        <div className={tab + " w-[60px]"}>Insert</div>
        <div className={tab + " w-[91px] text-[13.200px]"}>Modeling</div>
        <div className={tab + " w-14"}>View</div>
        <div className={tab + " w-[60px]"}>Help</div>
      </nav>
      <div className="flex">
        <Group label="Clipboard" width="w-[154px]">
          <div className="flex w-[44px] flex-col items-center pl-[9px] pt-[3px]">
            <Icon w={28} h={31} className="ml-[3px]">
              <path d="M1.500 4.500h19v23h-19z" fill="#f5f4f1" stroke="#e8cda6" strokeWidth="2" /><path d="M5 7V4h4c0-4 6-4 6 0h4v3z" fill="#f1f1ef" stroke="#b9b8b6" />
              <path d="M14 12.500h12.500v17H14z" fill="#f5f5f4" stroke="#b5b4b2" strokeWidth="1.300" />
            </Icon>
            <span className="mt-px text-[10.900px] leading-[15.500px] text-[#b3b2b0]">Paste</span>
          </div>
          <div className="ml-[5px] flex flex-col gap-[7px] pt-[5px] text-[10.900px] leading-4 text-[#bdbcba]">
            <span className="flex items-center gap-1"><Icon w={16} h={16}><path d="M5 1l5 10M11 1L6 11" stroke="#aaa" strokeWidth="1.300" /><circle cx="5" cy="13" r="2" stroke="#95bdd4" strokeWidth="1.300" /><circle cx="11" cy="13" r="2" stroke="#95bdd4" strokeWidth="1.300" /></Icon>Cut</span>
            <span className="flex items-center gap-1"><Icon w={16} h={16}><path d="M6 12H1V1h5l2 2M6.500 4.500H12l3 3V15H6.500zM11 4.500V8h4M9 10h4M9 12h4" stroke="#aaa9a7" strokeWidth="1.200" /></Icon>Copy</span>
            <span className="flex items-center gap-1 whitespace-nowrap"><Icon w={16} h={16}><path d="M1 7l5-2 5 5-3 5z" fill="#f3dfc6" stroke="#e0bd91" /><path d="M6 5l2-2 2 1 3-3 2 2-3 3 1 2-2 2z" fill="#ddd" stroke="#aaa" /></Icon>Format painter</span>
          </div>
        </Group>
        <Group label="Data" width="w-[275px]" pad="pl-2">
          <Tool icon="get" lines={["Get", "data"]} width="w-[38px]" shift="ml-[11px]" arrow />
          <Tool icon="excel" lines={["Excel"]} width="w-10" shift="ml-[8px]" />
          <Tool icon="pbi" lines={["Power BI", "datasets"]} width="w-[46px]" shift="ml-[11px]" />
          <Tool icon="sql" lines={["SQL", "Server"]} width="w-[46px]" shift="ml-[8px]" />
          <Tool icon="enter" lines={["Enter", "data"]} width="w-8" />
          <Tool icon="recent" lines={["Recent", "sources"]} width="w-[60px]" shift="ml-[7px]" arrow />
        </Group>
        <Group label="Queries" width="w-[113px]" pad="pl-2">
          <Tool icon="transform" lines={["Transform", "data"]} width="w-[54px]" shift="ml-1" arrow />
          <Tool icon="refresh" lines={["Refresh"]} width="w-[41px] ml-[1px]" shift="ml-[7px]" highlight />
        </Group>
        <Group label="Insert" width="w-[141px]" pad="pl-[7px]">
          <Tool icon="newVisual" lines={["New", "visual"]} width="w-[39px]" shift="ml-[3px]" />
          <Tool icon="textBox" lines={["Text", "box"]} width="w-[38px]" />
          <Tool icon="more" lines={["More", "visuals"]} width="w-[49px]" shift="ml-[3px]" arrow />
        </Group>
        <Group label="Calculations" width="w-[111px]" pad="pl-[9px]">
          <Tool icon="calc" lines={["New", "measure"]} width="w-[46px]" shift="ml-[2px]" />
          <Tool icon="quick" lines={["Quick", "measure"]} width="w-[48px]" shift="-ml-[7px]" />
        </Group>
        <Group label="Share" width="w-[57px]">
          <Tool icon="publish" lines={["Publish"]} width="w-[56px]" shift="ml-[2px]" />
        </Group>
        <Icon w={9} h={6} className="ml-auto mr-[1px] mt-[75px]"><path d="M1 5l3.500-4L8 5" stroke="#444" strokeWidth="2" /></Icon>
      </div>
    </header>
  );
}

const rows: [string, number][] = [
  ["Cameras", 6], ["Curtain Panels System Panel", 44], ["Curtain Wall Grids", 32], ["Curtain Wall Mullions Rectangular Mullion", 144],
  ["Doors Curtain Wall Dbl Glass", 3], ["Doors Entrance door", 2], ["Doors M_Double-Flush", 1], ["Doors Pocket_Slider_Door_5851", 3],
  ["Doors Single-Flush", 7], ["Floors", 8], ["Rectangular Straight Wall Opening", 2], ["Roofs", 2], ["Split Face", 2],
  ["Walls", 55], ["Windows M_Skylight", 2], ["Windows Single Window", 15],
];

function CategoryTable() {
  return (
    <div className="ml-[13px] mt-1 w-[285px] text-[10.400px] text-[#5b5957]">
      <div className="flex h-6 justify-between border-b-2 border-[#b5d8ee] pl-[2px] pr-1 pt-px text-[10.700px] leading-4">
        <span>Category</span><span>Count of uuid</span>
      </div>
      {rows.map(([name, n], i) => (
        <div key={name} className={"flex h-[17.030px] items-center justify-between whitespace-nowrap pl-[2px] pr-[3px] pt-px " + (i % 2 ? "bg-[#ededec]" : "")}>
          <span>{name}</span><span className="text-[10.800px]">{n}</span>
        </div>
      ))}
      <div className="flex h-5 items-center justify-between border-t-2 border-[#b5d8ee] pl-[2px] pr-[3px] text-[10.500px] font-bold text-[#333]">
        <span>Total</span><span>328</span>
      </div>
    </div>
  );
}

const slices: { label: string; value: number; color: string }[] = [
  { label: "Curtain Wall Mullions Rectang...", value: 144, color: "#168eff" },
  { label: "Walls", value: 55, color: "#13239b" },
  { label: "Curtain Panels System Panel", value: 44, color: "#e46d36" },
  { label: "Curtain Wall Grids", value: 32, color: "#754fc1" },
  { label: "Windows Single Window", value: 15, color: "#6b0279" },
  { label: "Floors", value: 8, color: "#1eaa41" },
  { label: "Doors Single-Flush", value: 7, color: "#d9b404" },
  { label: "Cameras", value: 6, color: "#e044a7" },
  { label: "Doors Curtain Wall Dbl Glass", value: 3, color: "#fe9f59" },
  { label: "Doors Pocket_Slider_Door_5851", value: 3, color: "#d64550" },
  { label: "Doors Entrance door", value: 2, color: "#1a7578" },
  { label: "Rectangular Straight Wall Ope...", value: 2, color: "#b85bcb" },
  { label: "Roofs", value: 2, color: "#f172cd" },
  { label: "Split Face", value: 2, color: "#1fc5ee" },
  { label: "Windows M_Skylight", value: 2, color: "#4390fb" },
  { label: "Doors M_Double-Flush", value: 1, color: "#b3a1fb" },
];

const CX = 1361.2, CY = 370, R = 124.5, RI = 74.500, TOTAL = 328;

function ring(start: number, end: number) {
  const p = (f: number, r: number) => `${CX + r * Math.sin(f * 2 * Math.PI)} ${CY - r * Math.cos(f * 2 * Math.PI)}`;
  return `M${p(start, R)}A${R} ${R} 0 0 1 ${p(end, R)}L${p(end, RI)}A${RI} ${RI} 0 0 0 ${p(start, RI)}Z`;
}

const callouts: [string, number, number, number][] = [
  ["144 (43.9%)", 1464, 264, 50], ["55 (16.77%)", 1277.5, 510, 50.5], ["44 (13.41%)", 1189.500, 461, 50.5],
  ["32", 1209, 310.5, 10.500], ["(9.76%)", 1187.500, 323.5, 31.5], ["15 (4.57%)", 1197, 281.700, 43.5], ["8 (2.44%)", 1223.500, 260, 39.5],
  ["7 (2.13%)", 1244.500, 247, 39.5], ["(0.91%)", 1285, 241.700, 32], ["3", 1312, 228.700, 5.200], ["(0.3%)", 1321, 238.700, 25.500], ["1", 1342, 225.3, 5],
];

function DonutChart() {
  let acc = 0;
  return (
    <Icon w={400} h={340} box="1155 190 400 340">
      {slices.map((s) => {
        const from = acc / TOTAL;
        acc += s.value;
        return <path key={s.label} d={ring(from, acc / TOTAL)} fill={s.color} />;
      })}
      <path d="M1443 271l8-9h9M1343 496l-2 13h-9M1262.500 452l-9 7.500h-9.500M1244 320l-11-5h-10M1263.500 287l-9-7h-9.500M1284 268l-7-9.300h-10.500M1303 256l-5-9.500-5-.5M1321 233h9l2.500 16M1350 229.700h10.400l.3 12.300" stroke="#bdbcba" />
      {callouts.map(([t, x, y, w]) => (
        <text key={t} x={x} y={y + 3.800} fontSize="10.600" fill="#727275" textLength={w} lengthAdjust="spacingAndGlyphs">{t}</text>
      ))}
    </Icon>
  );
}

function Legend() {
  return (
    <div className="ml-[13px] mt-[6px] text-[10.500px] text-[#6f6e6d]">
      <div className="h-[17px] text-[10.600px] font-bold leading-4 text-[#4a4a49]">Category</div>
      {slices.map((s) => (
        <div key={s.label} className="flex h-[20.780px] items-center gap-[2px] whitespace-nowrap pb-1 leading-4">
          <span className="size-2 rounded-full" style={{ backgroundColor: s.color }} />{s.label}
        </div>
      ))}
    </div>
  );
}

function Card({ title, value, caption, width, inset }: { title: string; value: string; caption: string; width: string; inset: string }) {
  return (
    <div className={"shrink-0 font-['Roboto'] " + width}>
      <div className="text-[13.200px] font-medium leading-[18px] tracking-[0.2px] text-[#444342]">{title}</div>
      <div className={"flex flex-col items-center " + inset}>
        <div className="mt-[39px] origin-center scale-x-[0.86] whitespace-nowrap text-[44.500px] leading-[52px] tracking-[2.200px] text-[#262625]">{value}</div>
        <div className="-mt-px text-[13.200px] leading-5 text-[#7a7978]">{caption}</div>
      </div>
    </div>
  );
}

function ReportCanvas() {
  return (
    <main className="flex w-[1050px] shrink-0 flex-col bg-[#fefefd]">
      <div className="flex h-[435px]">
        <CategoryTable />
        <div className="ml-[158px] flex flex-col">
          <h2 className="mt-[7px] h-[26px] whitespace-nowrap font-['Roboto'] text-[13.400px] font-medium leading-5 tracking-[0.100px] text-[#4b4a49]">Count of uuid by Category</h2>
          <DonutChart />
        </div>
        <div className="pt-[33px]"><Legend /></div>
      </div>
      <div className="flex h-[157px] border-b-[1.500px] border-dotted border-[#555] pl-1">
        <Card title="Total Wall length" value="379,510.00" caption="Length" width="w-[387px]" inset="w-[289px]" />
        <Card title="Total Wall Areas" value="1,085.00" caption="Area" width="w-[365px]" inset="w-[270px]" />
        <Card title="Total Wall Volumes" value="203.83" caption="Volume" width="w-[290px]" inset="w-[268px]" />
      </div>
    </main>
  );
}

function SidePane({ title, className, strong, filter }: { title: string; className: string; strong?: boolean; filter?: boolean }) {
  return (
    <div className={"flex shrink-0 flex-col items-center pt-[17px] text-[#4d4b49] " + className}>
      <Icon w={8} h={12}><path d="M7 1L1.500 6 7 11" stroke="#555" strokeWidth="1.400" /></Icon>
      {filter && <Icon w={12} h={13} className="ml-1 mt-[31px]"><path d="M11 1v10L5 8H1V5h4z" stroke="#777" strokeWidth="1.200" /></Icon>}
      <span className={"leading-5 [writing-mode:vertical-rl] " + (strong ? "mt-[11px] text-[13.200px] font-semibold text-[#333]" : "mt-[30px] text-[14.700px] font-medium")}>{title}</span>
    </div>
  );
}

function PowerBiWindow() {
  return (
    <section className="flex w-[1182px] shrink-0 flex-col bg-[#f1f1ef]">
      <BiHeader />
      <div className="flex h-[788px]">
        <aside className="flex w-[39px] shrink-0 border-r border-[#e5e4e2] bg-gradient-to-r from-[#d9d9d7] via-[#efefed] via-30% to-[#f1f1ef]">
          <div className="h-[39px] w-[3px] bg-[#dab92c]" />
          <div className="flex flex-1 flex-col items-center pr-0.5 pt-[11px]">
            <Icon w={15} h={14}><path d="M1 0v13h13" stroke="#555" strokeWidth="1.300" /><path d="M4 13V8M7.300 13V4M10.500 13V6M13.500 13V1" stroke="#555" strokeWidth="2" /></Icon>
            <Icon w={17} h={16} className="mt-[24px]"><path d="M1 1h15v14H1zM1 6h15M1 10h15M6 3v12M11 3v12" stroke="#666" strokeWidth="1.300" /><path d="M1 2.500h15" stroke="#777" strokeWidth="2" /></Icon>
            <Icon w={18} h={18} className="mt-[22px]"><path d="M1 6.500h6v7H1zM11 1h6v6h-6zM11 11h6v6h-6zM4 6V3h7M4 14v1.500h7M1 8h6M11 3h6M11 13h6" stroke="#666" strokeWidth="1.400" /></Icon>
          </div>
        </aside>
        <ReportCanvas />
        <SidePane title="Filters" className="w-[33px] border-l-2 border-[#dfdedc] bg-[#fefefd]" strong filter />
        <SidePane title="Visualizations" className="w-[32px] bg-[#f1f1f0]" />
        <SidePane title="Fields" className="w-7 border-l border-[#e5e4e2] bg-[#f0f0ef]" />
      </div>
      <div className="flex h-[34px] pl-[39px] text-[11.500px] text-[#4d4b49]">
        <div className="flex w-[38px] items-center justify-center gap-[17px] border-r border-[#cfcecc]">
          <Icon w={5} h={8}><path d="M5 0v8L0 4z" fill="#c5c4c2" /></Icon>
          <Icon w={5} h={8}><path d="M0 0v8l5-4z" fill="#c5c4c2" /></Icon>
        </div>
        <div className="flex w-[74px] items-center justify-center border-r border-[#e2e1df]">Page 1</div>
        <div className="flex w-[74px] items-center justify-center border-b-[3px] border-[#ecc81c] bg-[#fefefd] pt-[2px] text-[#333]">Page 2</div>
        <div className="mt-px flex h-8 w-[37px] items-center justify-center bg-[#f2c811] text-[#6e5e1c]"><Plus size={14} strokeWidth={4} /></div>
      </div>
      <footer className="flex h-[21px] items-center border-t border-[#dedddb] pl-1 text-[10.600px] tracking-[-0.200px] text-[#5a5856]">PAGE 2 OF 2</footer>
    </section>
  );
}

export default function App() {
  return (
    <div className="flex h-[1000px] w-[1842px] overflow-hidden font-['Open_Sans','Noto_Sans',sans-serif]">
      <RevitWindow />
      <PowerBiWindow />
    </div>
  );
}
